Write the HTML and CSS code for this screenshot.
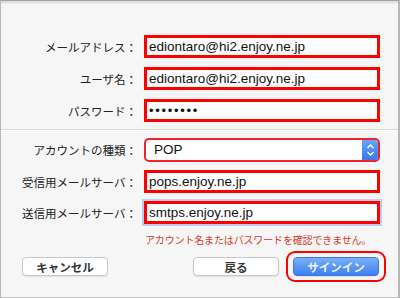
FILE: index.html
```html
<!DOCTYPE html>
<html lang="ja">
  <head>
    <meta charset="UTF-8" />
    <meta name="viewport" content="width=device-width, initial-scale=1.0" />
    <title>アカウントを追加</title>
    <link rel="stylesheet" href="styles.css">
  </head>
  <body>
    <div class="dialog">
      <div class="top-band"></div>

      <div class="form-section first">
        <div class="label">メールアドレス：</div>
        <div class="field">ediontaro@hi2.enjoy.ne.jp</div>

        <div class="label">ユーザ名：</div>
        <div class="field">ediontaro@hi2.enjoy.ne.jp</div>

        <div class="label">パスワード：</div>
        <div class="field password">••••••••</div>
      </div>

      <div class="separator"></div>

      <div class="form-section second">
        <div class="label">アカウントの種類：</div>
        <div class="select">
          <span class="select-value">POP</span>
          <span class="stepper">
            <svg width="9" height="14" viewBox="0 0 9 14">
              <path d="M1.5 5 L4.5 2 L7.5 5" fill="none" stroke="#fff" stroke-width="1.4" />
              <path d="M1.5 9 L4.5 12 L7.5 9" fill="none" stroke="#fff" stroke-width="1.4" />
            </svg>
          </span>
        </div>

        <div class="label">受信用メールサーバ：</div>
        <div class="field">pops.enjoy.ne.jp</div>

        <div class="label">送信用メールサーバ：</div>
        <div class="field focused">smtps.enjoy.ne.jp</div>

        <div class="error">アカウント名またはパスワードを確認できません。</div>
      </div>

      <div class="button-row">
        <button class="btn">キャンセル</button>
        <div class="right-buttons">
          <button class="btn">戻る</button>
          <span class="highlight">
            <button class="btn primary">サインイン</button>
          </span>
        </div>
      </div>
    </div>
  </body>
</html>
```

FILE: styles.css
```css
:root {
  --bg: #f6f6f6;
  --mark: #ff0000;
  --label: #222;
}

* {
  margin: 0;
  padding: 0;
  box-sizing: border-box;
}

body {
  font-family: "Noto Sans CJK JP", "Liberation Sans", sans-serif;
  background: var(--bg);
}

.dialog {
  width: 400px;
  height: 298px;
  background: var(--bg);
  border-top: 1px solid #a3a3a3;
  border-left: 1px solid #b8b8b8;
  border-right: 2px solid #b8b8b8;
  border-bottom: 1px solid #c4c4c4;
}

.top-band {
  height: 3px;
  background: linear-gradient(#d9d9d9, #ececec);
}

.form-section {
  display: grid;
  grid-template-columns: 136px 236px;
  column-gap: 7px;
  align-items: center;
}

.form-section.first {
  padding-top: 31px;
  padding-bottom: 7px;
  row-gap: 9px;
}

.form-section.second {
  padding-top: 7px;
  row-gap: 8px;
}

.separator {
  height: 2px;
  border-top: 1px solid #d6d6d6;
  border-bottom: 1px solid #fff;
}

.label {
  text-align: right;
  font-size: 11.5px;
  color: var(--label);
  white-space: nowrap;
}

.field {
  height: 23px;
  background: #fff;
  border: 3px solid var(--mark);
  padding-left: 2px;
  font-family: "Liberation Sans", sans-serif;
  font-size: 13.5px;
  line-height: 17px;
  color: #111;
}

.field.password {
  font-size: 13px;
  letter-spacing: 1.7px;
}

.field.focused {
  box-shadow: 0 0 0 2px #b9cdf0;
}

.select {
  height: 24px;
  display: flex;
  align-items: stretch;
  background: #fff;
  border: 2px solid #f0222c;
  border-radius: 5px;
}

.select-value {
  flex: 1;
  padding-left: 8px;
  font-family: "Liberation Sans", sans-serif;
  font-size: 13.5px;
  line-height: 20px;
  color: #111;
}

.stepper {
  width: 16px;
  display: flex;
  align-items: center;
  justify-content: center;
  background: linear-gradient(#6aa4f7, #3a78ec);
  border-radius: 0 3px 3px 0;
}

.error {
  grid-column: 2;
  margin-top: 2px;
  padding-left: 1px;
  font-size: 10px;
  line-height: 12px;
  letter-spacing: -0.15px;
  color: #d23a2c;
  white-space: nowrap;
}

.button-row {
  display: flex;
  justify-content: space-between;
  align-items: center;
  margin-top: 5px;
  padding: 0 12px 0 21px;
}

.right-buttons {
  display: flex;
  align-items: center;
  gap: 7px;
}

.btn {
  width: 86px;
  height: 19px;
  background: #fff;
  border: 1px solid #c8c8c8;
  border-radius: 4px;
  font-family: "Noto Sans CJK JP", sans-serif;
  font-size: 11.5px;
  font-weight: bold;
  color: #333;
  box-shadow: 0 1px 1px rgba(0, 0, 0, 0.08);
}

.btn.primary {
  background: linear-gradient(#79b0fa, #3d7ff0);
  border-color: #3f78dc;
  color: #eef4ff;
}

.highlight {
  display: flex;
  padding: 4px 5px;
  border: 2px solid var(--mark);
  border-radius: 9px;
}
```
